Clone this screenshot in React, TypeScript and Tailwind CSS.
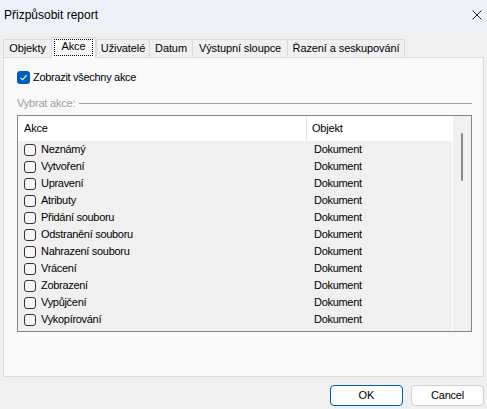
import React from "react";

const rows = [
  "Neznámý",
  "Vytvoření",
  "Upravení",
  "Atributy",
  "Přidání souboru",
  "Odstranění souboru",
  "Nahrazení souboru",
  "Vrácení",
  "Zobrazení",
  "Vypůjčení",
  "Vykopírování",
];

const tabs = [
  { label: "Objekty", w: "w-[48px]" },
  { label: "Akce", w: "w-[45px]", active: true },
  { label: "Uživatelé", w: "w-[53px]" },
  { label: "Datum", w: "w-[43px]" },
  { label: "Výstupní sloupce", w: "w-[95px]" },
  { label: "Řazení a seskupování", w: "w-[118px]" },
];

function Box() {
  return <div className="w-[12px] h-[12px] rounded-[3px] border border-[#333] bg-[#f6f6f6] shrink-0" />;
}

export default function App() {
  return (
    <div className="w-[487px] h-[409px] bg-[#f0f0f0] font-['Liberation_Sans',Arial,sans-serif] text-black flex flex-col overflow-hidden select-none">
      {/* Title bar */}
      <div className="h-[30px] bg-[#eef1f8] flex items-center justify-between pl-[4px] pr-[5px] shrink-0">
        <span className="text-[12px] leading-none">Přizpůsobit report</span>
        <svg width="10" height="10" viewBox="0 0 10 10">
          <path d="M0.5 0.5 L9.5 9.5 M9.5 0.5 L0.5 9.5" stroke="#222" strokeWidth="1" fill="none" />
        </svg>
      </div>

      {/* Tabs */}
      <div className="mt-[7px] px-[3px] h-[20px] flex items-end shrink-0 relative z-10">
        {tabs.map((t) =>
          t.active ? (
            <div
              key={t.label}
              className={`${t.w} h-[21px] -mb-px bg-[#f9f9f9] border border-b-0 border-[#d9d9d9] flex justify-center pt-[1px]`}
            >
              <div className="h-[17px] w-[39px] border border-dotted border-black flex items-center justify-center text-[11px] tracking-[-0.1px] leading-none pb-[2px]">
                {t.label}
              </div>
            </div>
          ) : (
            <div
              key={t.label}
              className={`${t.w} h-[18px] bg-[#f0f0f0] border border-b-0 border-r-0 last:border-r border-[#dadada] flex items-center justify-center text-[11px] tracking-[-0.1px] leading-none`}
            >
              {t.label}
            </div>
          )
        )}
      </div>

      {/* Panel */}
      <div className="mx-[3px] h-[320px] bg-[#f9f9f9] border border-[#dcdcdc] shrink-0 flex flex-col pl-[13px] pr-[10px]">
        <div className="mt-[13px] flex items-center h-[13px]">
          <div className="w-[13px] h-[13px] rounded-[3px] bg-[#005fb8] flex items-center justify-center">
            <svg width="9" height="9" viewBox="0 0 9 9">
              <path d="M1.5 4.8 L3.6 6.8 L7.6 2.2" stroke="#fff" strokeWidth="1.1" fill="none" />
            </svg>
          </div>
          <span className="ml-[3px] text-[11px] tracking-[-0.3px] leading-none">Zobrazit všechny akce</span>
        </div>

        <div className="mt-[13px] flex items-center h-[12px]">
          <span className="text-[11px] tracking-[-0.2px] leading-none text-[#a0a0a0]">Vybrat akce:</span>
          <div className="ml-[4px] flex-1 h-px bg-[#a0a0a0] mr-[1px]" />
        </div>

        <div className="mt-[6px] w-[455px] h-[217px] border border-[#868686] flex overflow-hidden bg-[#f0f0f0]">
          <div className="w-[434px] flex flex-col">
            <div className="h-[25px] bg-white flex items-center text-[11px] tracking-[-0.2px] leading-none shrink-0">
              <div className="w-[289px] h-full flex items-center pl-[6px] border-r border-[#e5e5e5]">Akce</div>
              <div className="pl-[5px]">Objekt</div>
            </div>
            <div className="flex flex-col">
              {rows.map((r) => (
                <div key={r} className="h-[17px] flex items-center text-[11px] tracking-[-0.3px] leading-none shrink-0">
                  <div className="w-[289px] flex items-center pl-[6px]">
                    <Box />
                    <span className="ml-[5px]">{r}</span>
                  </div>
                  <div className="pl-[7px]">Dokument</div>
                </div>
              ))}
              <div className="h-[17px] flex items-center shrink-0 pl-[6px]">
                <Box />
              </div>
            </div>
          </div>
          <div className="flex-1 border-l border-white bg-[#f0f0f0] relative">
            <div className="absolute left-[8px] top-[17px] w-[2px] h-[48px] rounded-full bg-[#8a8a8a]" />
          </div>
        </div>
      </div>

      {/* Buttons */}
      <div className="mt-[8px] flex justify-end gap-[8px] pr-[3px]">
        <button className="w-[73px] h-[21px] rounded-[4px] border border-[#005fb8] bg-[#fdfdfd] text-[11px] leading-none flex items-center justify-center">
          OK
        </button>
        <button className="w-[73px] h-[21px] rounded-[4px] border border-[#d0d0d0] bg-[#fdfdfd] text-[11px] tracking-[-0.2px] leading-none flex items-center justify-center">
          Cancel
        </button>
      </div>
    </div>
  );
}
